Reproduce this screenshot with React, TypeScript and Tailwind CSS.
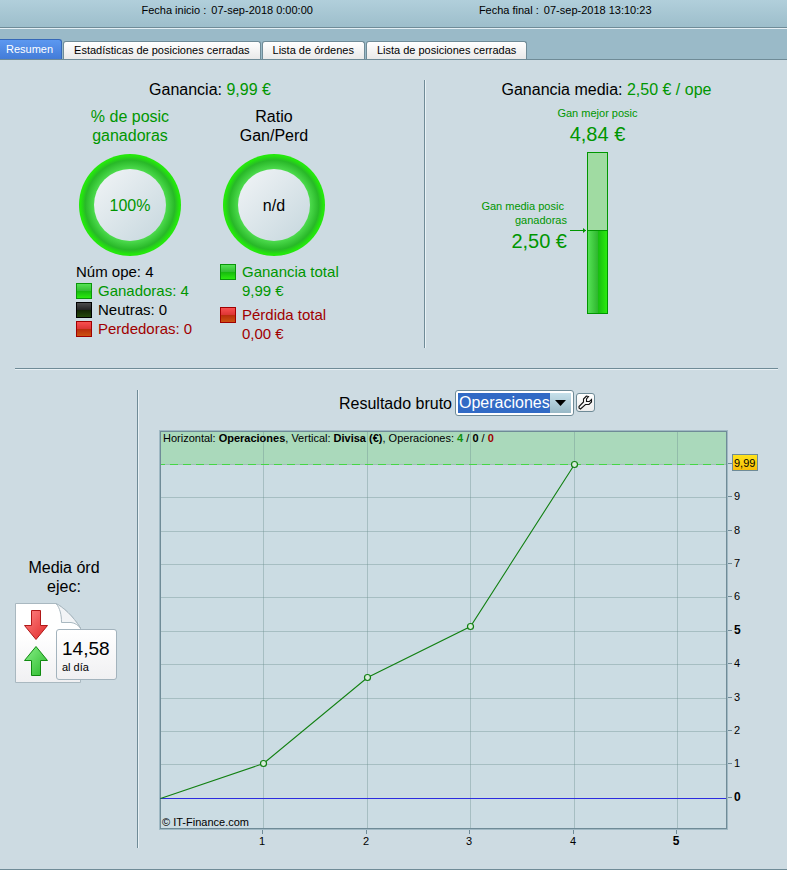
import { useState } from 'react'

const TABS = ['Resumen', 'Estadísticas de posiciones cerradas', 'Lista de órdenes', 'Lista de posiciones cerradas']

// Chart coordinates, in viewBox units
const PLOT = { left: 2, right: 567, top: 2, bottom: 398 }
const ZERO_Y = 368

const X_AXIS = [
  { label: '1', x: 104 },
  { label: '2', x: 208 },
  { label: '3', x: 311 },
  { label: '4', x: 415 },
  { label: '5', x: 518, bold: true },
]

const Y_AXIS = [
  { label: '9', y: 67 },
  { label: '8', y: 101 },
  { label: '7', y: 134 },
  { label: '6', y: 167 },
  { label: '5', y: 201, bold: true },
  { label: '4', y: 234 },
  { label: '3', y: 268 },
  { label: '2', y: 301 },
  { label: '1', y: 334 },
  { label: '0', y: ZERO_Y, bold: true },
]

const POINTS = [
  { x: 104, y: 333 },
  { x: 208, y: 247 },
  { x: 311, y: 196 },
  { x: 415, y: 34 },
]

const SWATCHES = {
  green: 'border-[#0a960a] bg-[linear-gradient(#55e255,#33bd33_50%,#16b80e_50%,#2bea10)]',
  black: 'border-black bg-[linear-gradient(#4c4c4c,#222222_50%,#122404_50%,#24480a)]',
  red: 'border-[#a00000] bg-[linear-gradient(#f85050,#dc3434_50%,#b82c0c_50%,#cc5210)]',
}

function Swatch({ color }: { color: keyof typeof SWATCHES }) {
  return <span className={`h-4 w-4 shrink-0 border ${SWATCHES[color]}`} />
}

function Ring({ children }: { children: React.ReactNode }) {
  return (
    <div className="flex h-[102px] w-[102px] items-center justify-center rounded-full bg-[radial-gradient(closest-side,#4edc4e_70%,#28b828_88%,#24e80c_97%)]">
      <div className="flex h-[72px] w-[72px] items-center justify-center rounded-full bg-[linear-gradient(135deg,#ebf0f3_15%,#ccdbe1_85%)]">
        {children}
      </div>
    </div>
  )
}

function GainSummary() {
  return (
    <section className="flex w-[54%] justify-center pr-[21px]">
      <div className="w-[288px]">
        <h2 className="pl-4 text-center">
          Ganancia: <span className="text-[#009600]">9,99 €</span>
        </h2>
        <div className="mt-2 grid grid-cols-2">
          <div className="flex flex-col items-center">
            <p className="mb-[9px] text-center text-[#009600]">
              % de posic
              <br />
              ganadoras
            </p>
            <Ring>
              <span className="text-[#009600]">100%</span>
            </Ring>
          </div>
          <div className="flex flex-col items-center">
            <p className="mb-[9px] text-center">
              Ratio
              <br />
              Gan/Perd
            </p>
            <Ring>n/d</Ring>
          </div>
        </div>
        <div className="mt-[6px] grid grid-cols-2 whitespace-nowrap text-[15px] leading-[19px]">
          <ul className="pl-[18px]">
            <li>Núm ope: 4</li>
            <li className="flex items-center gap-[6px] text-[#009600]">
              <Swatch color="green" />
              Ganadoras: 4
            </li>
            <li className="flex items-center gap-[6px]">
              <Swatch color="black" />
              Neutras: 0
            </li>
            <li className="flex items-center gap-[6px] text-[#a00000]">
              <Swatch color="red" />
              Perdedoras: 0
            </li>
          </ul>
          <ul className="space-y-[5px] pl-[18px]">
            <li className="flex gap-[6px] text-[#009600]">
              <span className="flex h-[19px] items-center">
                <Swatch color="green" />
              </span>
              <span>
                Ganancia total
                <br />
                9,99 €
              </span>
            </li>
            <li className="flex gap-[6px] text-[#a00000]">
              <span className="flex h-[19px] items-center">
                <Swatch color="red" />
              </span>
              <span>
                Pérdida total
                <br />
                0,00 €
              </span>
            </li>
          </ul>
        </div>
      </div>
    </section>
  )
}

function AverageGain() {
  return (
    <section className="flex-1 text-[#009600]">
      <h2 className="text-center">
        <span className="text-black">Ganancia media:</span> 2,50 € / ope
      </h2>
      <div className="pr-[18px]">
        <p className="mt-[7px] text-center text-[11px] leading-[14px]">Gan mejor posic</p>
        <p className="mt-[2px] text-center text-[20px] leading-6">4,84 €</p>
        <div className="mt-[6px] grid grid-cols-[1fr_auto_1fr]">
          <div className="flex items-start justify-end gap-[3px]">
            <div className="pt-[47px] text-right">
              <p className="text-[11px] leading-[14px]">
                Gan media posic&nbsp;
                <br />
                ganadoras
              </p>
              <p className="mt-[2px] text-[20px] leading-6">2,50 €</p>
            </div>
            <svg className="mt-[76px]" width="17" height="5" viewBox="0 0 17 5" aria-hidden="true">
              <path d="M0 2.5h16" stroke="#009600" />
              <path d="M13 0v5l3-2.5z" fill="#009600" />
            </svg>
          </div>
          <div className="h-[162px] w-[21px] border border-[#009600] bg-[#a0dba2]">
            <div className="mt-[77px] h-[83px] border-t border-[#009600] bg-[linear-gradient(90deg,#55e255,#30b830_50%,#16ba10_50%,#2bea10)]" />
          </div>
        </div>
      </div>
    </section>
  )
}

function DailyOrders() {
  return (
    <section className="flex w-[137px] flex-col items-center justify-center pr-[5px] pt-[2px]">
      <h2 className="mb-[7px] pr-1 text-center">
        Media órd
        <br />
        ejec:
      </h2>
      <div className="relative h-20 w-[102px]">
        <svg width="68" height="80" viewBox="0 0 68 80" aria-hidden="true">
          <defs>
            <linearGradient id="page" x1="0" y1="0" x2="0" y2="1">
              <stop offset="0.4" stopColor="#ffffff" />
              <stop offset="1" stopColor="#f0f0f2" />
            </linearGradient>
            <linearGradient id="down" x1="0" y1="0" x2="1" y2="1">
              <stop offset="0" stopColor="#ff8585" />
              <stop offset="1" stopColor="#e02828" />
            </linearGradient>
            <linearGradient id="up" x1="0" y1="0" x2="1" y2="1">
              <stop offset="0" stopColor="#8af08a" />
              <stop offset="1" stopColor="#28b828" />
            </linearGradient>
          </defs>
          <path d="M.5.5H41C48 4 58 13 65.500 25V79.500H.5Z" fill="url(#page)" stroke="#a9b8c0" />
          <path d="M41 .5C45 5 46.500 12 46.500 19.500H56C60 20 63 22 65.500 25C58 13 48 4 41 .5Z" fill="#f2f4f6" stroke="#a9b8c0" />
          <path d="M16.500 7.500h9v15h7L21 36.500L9.500 22.500h7Z" fill="url(#down)" stroke="#b01818" />
          <path d="M21 43.500L32.500 57.500h-7v15h-9v-15h-7Z" fill="url(#up)" stroke="#108a10" />
        </svg>
        <div className="absolute right-0 top-[26px] h-[51px] w-[61px] rounded-[3px] border border-[#a3b3bd] bg-[linear-gradient(#ffffff,#f0f0f2)] pl-[5px] pt-[7px]">
          <p className="text-[19px] leading-6">14,58</p>
          <p className="text-[11px] leading-[13px]">al día</p>
        </div>
      </div>
    </section>
  )
}

function ResultChart() {
  const line = POINTS.map((p) => `${p.x + 0.5},${p.y + 0.5}`).join(' ')

  return (
    <svg viewBox="0 0 628 418" className="h-auto w-full text-[11px]" role="img" aria-label="Resultado bruto">
      <defs>
        <linearGradient id="lastValue" x1="0" y1="0" x2="0" y2="1">
          <stop offset="0" stopColor="#ffe41c" />
          <stop offset="1" stopColor="#f8bc08" />
        </linearGradient>
      </defs>

      <g shapeRendering="crispEdges">
        <rect x="0.5" y="0.5" width="568" height="399" fill="#cbdce3" stroke="#a0b9c4" />
        <rect x={PLOT.left} y={PLOT.top} width="565" height="32" fill="#aad9bb" />
        {X_AXIS.map((t) => (
          <g key={t.label}>
            <path d={`M${t.x + 0.5} ${PLOT.top}V${PLOT.bottom}`} stroke="#6f9191" strokeOpacity="0.4" />
            <path d={`M${t.x - 0.5} 400v4`} stroke="#6f8b97" />
          </g>
        ))}
        {Y_AXIS.map((t) => (
          <g key={t.label}>
            {t.y !== ZERO_Y && (
              <path d={`M${PLOT.left} ${t.y + 0.5}H${PLOT.right}`} stroke="#6f9191" strokeOpacity="0.4" />
            )}
            <path d={`M569 ${t.y - 0.5}h4`} stroke="#6f8b97" />
          </g>
        ))}
        <path d={`M${PLOT.left} 34.500H${PLOT.right}`} stroke="#a0c0b8" />
        <path d={`M${PLOT.left} 34.500H${PLOT.right}`} stroke="#45d645" strokeDasharray="8 5" strokeDashoffset="4" />
        <path d="M569 33.500h4" stroke="#6f8b97" />
        <rect x="1.500" y="1.500" width="566" height="397" fill="none" stroke="#6f8b97" />
        <path d={`M1 ${ZERO_Y + 0.5}H${PLOT.right}`} stroke="#2c2ce0" />
        <rect x="573.500" y="24.500" width="25" height="16" fill="url(#lastValue)" stroke="#6f8b97" />
      </g>

      <polyline points={`1.500,368.500 ${line}`} fill="none" stroke="#128012" strokeWidth="1.100" />
      {POINTS.map((p) => (
        <circle key={p.x} cx={p.x + 0.5} cy={p.y + 0.5} r="3" fill="#d8ecdc" stroke="#128012" strokeWidth="1.200" />
      ))}

      <text x="4" y="12">
        Horizontal: <tspan fontWeight="bold">Operaciones</tspan>, Vertical: <tspan fontWeight="bold">Divisa (€)</tspan>,
        Operaciones:{' '}
        <tspan fontWeight="bold" fill="#109010">
          4
        </tspan>{' '}
        / <tspan fontWeight="bold">0</tspan> /{' '}
        <tspan fontWeight="bold" fill="#a00000">
          0
        </tspan>
      </text>
      <text x="3" y="396">
        © IT-Finance.com
      </text>
      {Y_AXIS.map((t) => (
        <text key={t.label} x="575" y={t.y + 3} className={t.bold ? 'text-[12px] font-bold' : ''}>
          {t.label}
        </text>
      ))}
      {X_AXIS.map((t) => (
        <text key={t.label} x={t.x - 1} y="415" textAnchor="middle" className={t.bold ? 'text-[12px] font-bold' : ''}>
          {t.label}
        </text>
      ))}
      <text x="575" y="37">
        9,99
      </text>
    </svg>
  )
}

function GrossResult() {
  const [unit, setUnit] = useState('Operaciones')

  return (
    <section className="flex-1 pl-5">
      <div className="mb-[14px] flex h-[26px] items-center justify-center pr-3">
        <label htmlFor="unit" className="mr-[3px] text-[16px]">
          Resultado bruto
        </label>
        <div className="flex h-[26px] rounded-[3px] border border-[#6f8b97] bg-white p-[2px]">
          <select
            id="unit"
            value={unit}
            onChange={(e) => setUnit(e.target.value)}
            className="w-[92px] appearance-none bg-[#316ac5] pl-px text-[16px] leading-5 text-white outline-none"
          >
            <option>Operaciones</option>
            <option>Tiempo</option>
          </select>
          <span className="pointer-events-none flex w-[21px] items-center justify-center bg-[linear-gradient(#c6e0ea,#98b8c6)]">
            <svg width="11" height="6" viewBox="0 0 11 6" aria-hidden="true">
              <path d="M0 0h11L5.500 6z" fill="#000" />
            </svg>
          </span>
        </div>
        <button
          aria-label="Configurar"
          className="mb-[2px] ml-[2px] flex h-[19px] w-[19px] items-center justify-center rounded-[3px] border border-[#6f8b97] bg-[linear-gradient(#ffffff,#ececec)]"
        >
          <svg width="15" height="15" viewBox="0 0 15 15" fill="none" stroke="#111" strokeWidth="1.100" aria-hidden="true">
            <path d="M8.500 1L5.500 4V7L1 11.500V13L2.500 14L7.500 9.500H11L13.500 7V4.500L11.500 6.500H8.500V4L10.500 1.500Z" />
          </svg>
        </button>
      </div>
      <ResultChart />
    </section>
  )
}

export default function App() {
  const [activeTab, setActiveTab] = useState(TABS[0])

  return (
    <div className="min-h-screen bg-[#cddbe2] font-['Liberation_Sans',Arial,sans-serif] text-[16px] leading-[19px] text-black">
      <header className="flex h-7 justify-center gap-[166px] border-b border-[#6f8b97] bg-[linear-gradient(#b1cfdb,#9dbecb)] pl-[6px] pt-1 text-[11px] leading-[13px]">
        <p>
          Fecha inicio : <span className="ml-[2px]">07-sep-2018 0:00:00</span>
        </p>
        <p>
          Fecha final : <span className="ml-[2px]">07-sep-2018 13:10:23</span>
        </p>
      </header>

      <nav className="flex h-8 items-end gap-px border-b border-t border-b-[#6f8b97] border-t-[#e4eff4] bg-[#9abac8]">
        {TABS.map((tab) => (
          <button
            key={tab}
            onClick={() => setActiveTab(tab)}
            className={`whitespace-nowrap border border-b-0 text-[11px] leading-[13px] ${
              tab === activeTab
                ? 'h-[20px] rounded-tr-[3px] border-l-0 border-[#3568b8] bg-[linear-gradient(#5c98f0,#437cd8)] pl-[6px] pr-[8px] text-white'
                : 'h-[18px] rounded-t-[3px] border-[#6f8b97] bg-[linear-gradient(#ffffff,#e9e9e9)] px-[10px]'
            }`}
          >
            {tab}
          </button>
        ))}
      </nav>

      <main>
        <div className="flex pb-5 pt-5">
          <GainSummary />
          <div className="-ml-px h-[268px] border-l border-r border-l-[#6f8b97] border-r-[#e8f1f5]" />
          <AverageGain />
        </div>
        <hr className="ml-[15px] mr-[9px] h-[2px] border-b border-t border-b-[#e8f1f5] border-t-[#6f8b97]" />
        <div className="flex border-b border-[#6f8b97] pb-[21px] pt-5">
          <DailyOrders />
          <div className="border-l border-r border-l-[#6f8b97] border-r-[#e8f1f5]" />
          <GrossResult />
        </div>
      </main>
    </div>
  )
}
